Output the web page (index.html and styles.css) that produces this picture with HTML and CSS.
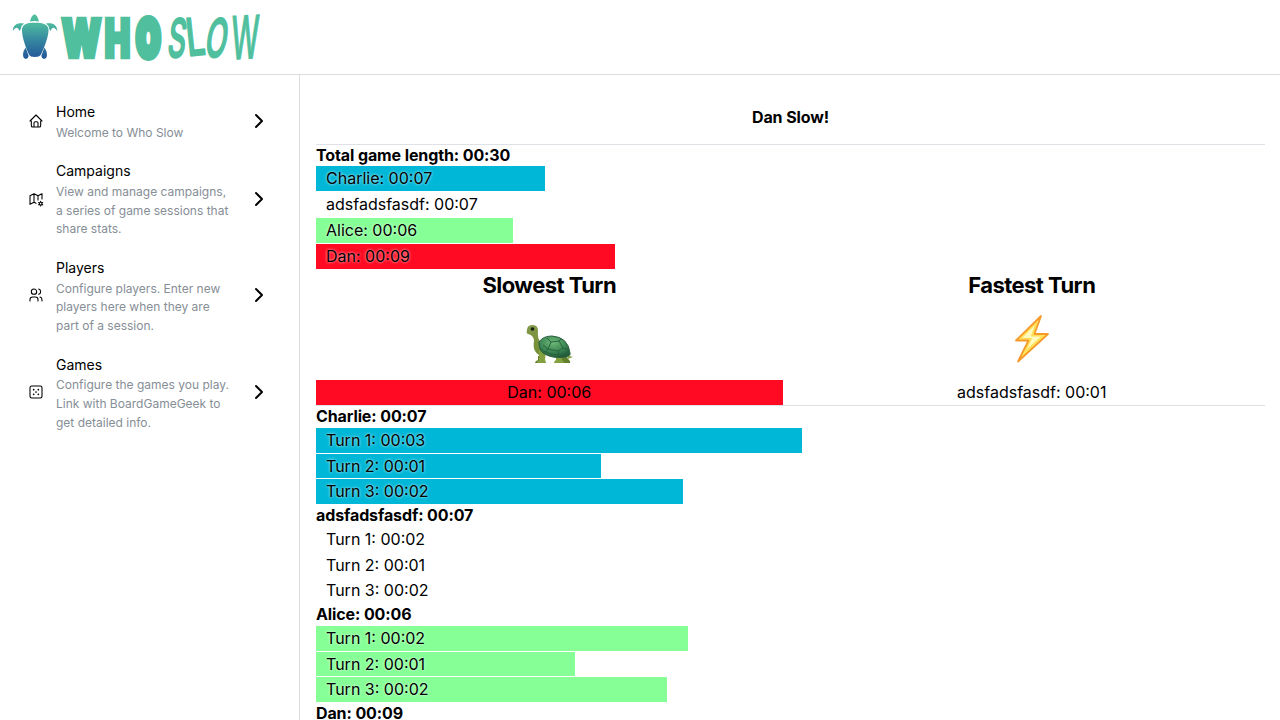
FILE: index.html
```html
<!DOCTYPE html>
<html lang="en">
<head>
<meta charset="utf-8">
<title>Who Slow</title>
<link rel="stylesheet" href="styles.css">
</head>
<body>
<header class="header">
  <svg class="logo" width="264" height="74" viewBox="0 0 264 74" role="img" aria-label="Who Slow">
    <defs>
      <linearGradient id="sea" gradientUnits="userSpaceOnUse" x1="0" y1="14" x2="0" y2="59">
        <stop offset="0" stop-color="#4fc09e"/><stop offset=".25" stop-color="#4bb59f"/><stop offset=".6" stop-color="#3484a0"/><stop offset="1" stop-color="#22569a"/>
      </linearGradient>
    </defs>
    <g fill="url(#sea)">
      <path d="M30 21.500C31 17 33 14.500 34.500 14.500S38 17 39 21.500Q34.500 20.500 30 21.500Z"/>
      <path d="M22 29C23 24.500 26 22.800 34.800 22.800S47.500 24.500 48.500 29C49 35 45 46 41 54.500Q39.500 57 34.800 57T29 54.500C25 46 21.500 35 22 29Z"/>
      <path d="M12.800 31C13 25 17 22.500 24 23.500Q21.500 25 21 28.500L19.500 31Q18 27 15.800 28Q14 29 12.800 31Z"/>
      <path d="M57.300 31C57 25 53 22.500 46 23.500Q48.500 25 49 28.500L50.500 31Q52 27 54.200 28Q56 29 57.300 31Z"/>
      <path d="M25.700 47.500L28.700 56Q28 59 26 59Q23 58.500 23 54.500Q23.500 50 25.700 47.500Z"/>
      <path d="M44.300 47.500L41.300 56Q42 59 44 59Q47 58.500 47 54.500Q46.500 50 44.300 47.500Z"/>
    </g>
    <g class="logo-who">
      <text transform="translate(61.700 57.300) scale(.7 1)">W</text>
      <text transform="translate(104.800 57.300) scale(.65 1)">H</text>
      <text class="logo-o" transform="translate(136.500 56.300) scale(.62 1)">O</text>
    </g>
    <g class="logo-slow">
      <text transform="translate(166.500 57) skewX(-6) scale(.53 1)">S</text>
      <text transform="translate(188 56) rotate(-6) scale(.62 .97)">L</text>
      <text transform="translate(203.500 56.500) skewX(-9) scale(.53 1)">O</text>
      <text class="logo-w" transform="translate(230.500 59.500) rotate(-3) skewX(-5) scale(.53 1.120)">W</text>
    </g>
  </svg>
</header>
<div class="shell">
  <nav class="nav">
    <a class="link">
      <svg class="icon" viewBox="0 0 24 24"><path d="M5 12H3l9-9 9 9h-2M5 12v7a2 2 0 0 0 2 2h10a2 2 0 0 0 2-2v-7M9 21v-6a2 2 0 0 1 2-2h2a2 2 0 0 1 2 2v6"/></svg>
      <span class="link-body"><span class="label">Home</span><span class="desc">Welcome to Who Slow</span></span>
      <svg class="chevron" viewBox="0 0 24 24"><path d="M9 6l6 6-6 6"/></svg>
    </a>
    <a class="link">
      <svg class="icon" viewBox="0 0 24 24"><path d="M12 18.500L9 17l-6 3V7l6-3 6 3 6-3v8M9 4v13M15 7v6.500M17 19a2 2 0 1 0 4 0 2 2 0 1 0-4 0M19 15.500V17M19 21v1.500M22.030 17.250l-1.300.75M17.270 20l-1.300.75M15.970 17.250l1.300.75M20.730 20l1.300.75"/></svg>
      <span class="link-body"><span class="label">Campaigns</span><span class="desc">View and manage campaigns, a series of game sessions that share stats.</span></span>
      <svg class="chevron" viewBox="0 0 24 24"><path d="M9 6l6 6-6 6"/></svg>
    </a>
    <a class="link">
      <svg class="icon" viewBox="0 0 24 24"><path d="M5 7a4 4 0 1 0 8 0 4 4 0 1 0-8 0M3 21v-2a4 4 0 0 1 4-4h4a4 4 0 0 1 4 4v2M16 3.130a4 4 0 0 1 0 7.750M21 21v-2a4 4 0 0 0-3-3.850"/></svg>
      <span class="link-body"><span class="label">Players</span><span class="desc">Configure players. Enter new players here when they are part of a session.</span></span>
      <svg class="chevron" viewBox="0 0 24 24"><path d="M9 6l6 6-6 6"/></svg>
    </a>
    <a class="link">
      <svg class="icon" viewBox="0 0 24 24"><rect x="3" y="3" width="18" height="18" rx="2.500"/><g class="pips"><circle cx="8.500" cy="8.500" r=".5"/><circle cx="15.500" cy="8.500" r=".5"/><circle cx="15.500" cy="15.500" r=".5"/><circle cx="8.500" cy="15.500" r=".5"/><circle cx="12" cy="12" r=".5"/></g></svg>
      <span class="link-body"><span class="label">Games</span><span class="desc">Configure the games you play. Link with BoardGameGeek to get detailed info.</span></span>
      <svg class="chevron" viewBox="0 0 24 24"><path d="M9 6l6 6-6 6"/></svg>
    </a>
  </nav>
  <main class="main">
    <h4 class="result">Dan Slow!</h4>
    <section class="section">
      <h4 class="heading">Total game length: 00:30</h4>
      <div class="bar cyan" style="width:229px">Charlie: 00:07</div>
      <div class="bar">adsfadsfasdf: 00:07</div>
      <div class="bar green" style="width:197px">Alice: 00:06</div>
      <div class="bar red" style="width:299px">Dan: 00:09</div>
    </section>
    <section class="extremes">
      <div class="extreme">
        <h2 class="extreme-title">Slowest Turn</h2>
        <div class="emoji turtle">
          <svg width="50" height="42" viewBox="0 0 50 42" role="img" aria-label="Turtle">
            <defs>
              <radialGradient id="shell" cx=".45" cy=".3" r=".7"><stop offset="0" stop-color="#6fb978"/><stop offset=".6" stop-color="#3d8753"/><stop offset="1" stop-color="#225b39"/></radialGradient>
              <linearGradient id="skin" x1="0" y1="0" x2="0" y2="1"><stop offset="0" stop-color="#83994a"/><stop offset="1" stop-color="#718d32"/></linearGradient>
            </defs>
            <path d="M42 30l6 2-5 2z" fill="#8fa84d"/>
            <path d="M13 31h5l1 7h-9q0-2 3-3zM34 31h7l3 4q2 1 1 3H32q0-2 3-3z" fill="#62802d"/>
            <path d="M2 5Q2 0 8 0Q13 0 13 6Q12 13 16 18L19 31Q13 31 10 26Q8 23 9 15Q8 10 3 9Q1 8 2 5Z" fill="url(#skin)"/>
            <path d="M14 25h7l-1 10q1 1 1 3h-9q0-2 2-3zM31 31l5-1 1 5q2 1 2 3H29q0-2 2-3z" fill="#84a13f"/>
            <path d="M14 17Q18 11 27 11Q43 12 45 28Q46 31 40 32Q27 34 18 28Q14 25 14 17Z" fill="url(#shell)" stroke="#285f3e" stroke-width="1"/>
            <path d="M15 23Q21 30 35 30Q41 30 45 28M22 13l4 4-3 7-5-4M26 17l8-1 4 7-5 3-10-2M34 16l2-2M38 23l5 1M33 26l1 4M23 24l-2 3" fill="none" stroke="#26633f" stroke-width="1"/>
            <circle cx="7.500" cy="4" r="1.800" fill="#17210f"/>
          </svg>
        </div>
        <div class="turn red">Dan: 00:06</div>
      </div>
      <div class="extreme">
        <h2 class="extreme-title">Fastest Turn</h2>
        <div class="emoji bolt">
          <svg width="36" height="50" viewBox="0 0 36 50" role="img" aria-label="Lightning">
            <path d="M27 2L2 26.500H14.500L4 47.500L34 20H20.500Z" fill="#ffe95c" stroke="#f79a2c" stroke-width="1.800" stroke-linejoin="round"/>
            <path d="M22 9.500L7 24.500H17.500L11.500 37L28 22H17.500Z" fill="#fffbc0" stroke="#ffda50" stroke-width="1"/>
          </svg>
        </div>
        <div class="turn">adsfadsfasdf: 00:01</div>
      </div>
    </section>
    <section class="section">
      <h4 class="heading">Charlie: 00:07</h4>
      <div class="bar cyan" style="width:486px">Turn 1: 00:03</div>
      <div class="bar cyan" style="width:285px">Turn 2: 00:01</div>
      <div class="bar cyan" style="width:367px">Turn 3: 00:02</div>
      <h4 class="heading">adsfadsfasdf: 00:07</h4>
      <div class="bar">Turn 1: 00:02</div>
      <div class="bar">Turn 2: 00:01</div>
      <div class="bar">Turn 3: 00:02</div>
      <h4 class="heading">Alice: 00:06</h4>
      <div class="bar green" style="width:372px">Turn 1: 00:02</div>
      <div class="bar green" style="width:259px">Turn 2: 00:01</div>
      <div class="bar green" style="width:351px">Turn 3: 00:02</div>
      <h4 class="heading">Dan: 00:09</h4>
    </section>
  </main>
</div>
</body>
</html>
```
FILE: styles.css
```css
* { box-sizing: border-box; }
body { margin: 0; height: 720px; overflow: hidden; background: #fff; color: #000; font: 16px/1.55 Inter, sans-serif; }
h2, h4 { margin: 0; font-weight: 700; }
.header { height: 75px; border-bottom: 1px solid #dcdcdc; }
.logo { display: block; }
.logo-who { font: 900 52px Inter, sans-serif; fill: #50bf9e; stroke: #50bf9e; stroke-width: 4.5px; }
.logo-o { font-size: 49px; stroke-width: 8px; }
.logo-slow { font: 500 53px Inter, sans-serif; fill: #50bf9e; stroke: #50bf9e; stroke-width: 2px; stroke-linejoin: round; }
.logo-w { stroke-width: 1px; }
.shell { display: flex; height: 645px; }
.nav { width: 300px; flex: none; padding: 16px; border-right: 1px solid #dcdcdc; }
.link { display: flex; align-items: center; padding: 8px 12px; }
.icon { width: 16px; height: 16px; flex: none; margin-right: 12px; }
.icon, .chevron { fill: none; stroke: #000; stroke-width: 2; stroke-linecap: round; stroke-linejoin: round; }
.icon { stroke-width: 1.6; }
.pips { fill: #000; }
.chevron { width: 24px; height: 24px; flex: none; margin-left: 12px; }
.link-body { flex: 1; }
.label { display: block; height: 24.8px; padding-top: 1px; font-size: 14px; line-height: 24.8px; }
.desc { display: block; color: #868e96; font-size: 12px; line-height: 18.6px; }
.main { flex: 1; overflow: hidden; padding: 16px 15px 0 16px; }
.result { height: 52.85px; padding-top: 15.5px; font-size: 16px; line-height: 21.6px; letter-spacing: -.1px; text-align: center; }
.section { border-top: 1px solid #dee2e6; }
.heading { font-size: 16px; line-height: 21.6px; letter-spacing: -.11px; }
.bar { height: 24.8px; margin-bottom: 1px; padding-left: 10px; text-shadow: 0 0 3px rgba(255, 255, 255, .9); }
.cyan { background: #00b7d7; }
.green { background: #86ff96; }
.red { background: #ff0a22; }
.extremes { display: grid; grid-template-columns: 1fr 1fr; gap: 16px; text-align: center; }
.extreme-title { height: 30.8px; padding-top: .5px; font-size: 22px; line-height: 30.8px; letter-spacing: -.55px; }
.emoji { display: flex; justify-content: center; height: 79.95px; padding-top: 24.6px; }
.turtle { padding-left: 1px; }
.bolt { padding-top: 14px; }
.turn { height: 24.8px; }
```
